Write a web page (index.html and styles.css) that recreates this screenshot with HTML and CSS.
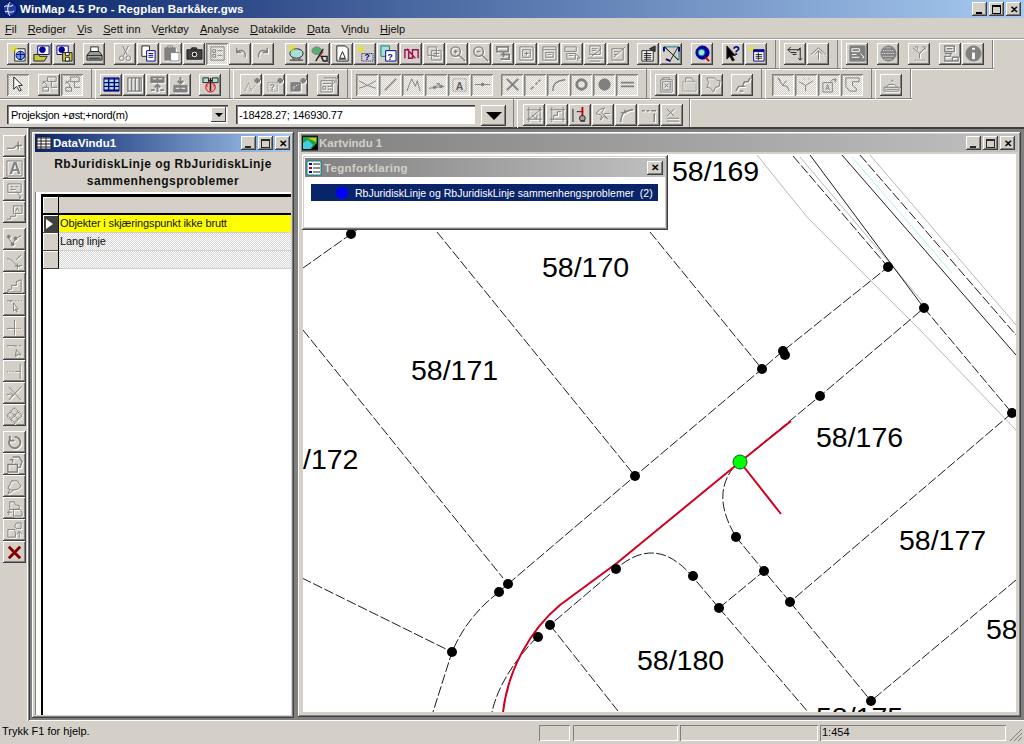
FILE: index.html
```html
<!DOCTYPE html>
<html lang="no">
<head>
<meta charset="utf-8">
<title>WinMap 4.5 Pro - Regplan Barkåker.gws</title>
<link rel="stylesheet" href="styles.css">
</head>
<body>
<header class="titlebar">
  <svg class="appicon" viewBox="0 0 16 16"><circle cx="8" cy="8" r="7" class="sb fn"/><path class="sw" d="M2 6c3-3 6 1 9-2M3 11c3-2 5 2 9-1M8 1c-3 4-3 10 0 14"/></svg>
  <span class="tt">WinMap 4.5 Pro - Regplan Barkåker.gws</span>
  <span class="wbtns top"><b class="wb"><i class="mn"></i></b><b class="wb"><i class="mx"></i></b><b class="wb cl">✕</b></span>
</header>
<nav class="menu">
  <span><u>F</u>il</span><span><u>R</u>ediger</span><span><u>V</u>is</span><span><u>S</u>ett inn</span><span>V<u>e</u>rktøy</span><span><u>A</u>nalyse</span><span><u>D</u>atakilde</span><span><u>D</u>ata</span><span>V<u>i</u>ndu</span><span><u>H</u>jelp</span>
</nav>

<section class="bands">
<div class="band b1">
  <button class="tb"><svg viewBox="0 0 18 18"><path class="sk fw" d="M5 4h11v13H5z"/><circle cx="11" cy="11" r="4.5" class="sb fs"/><path class="sb" d="M7 10h8M11 7v8"/><path class="sy" d="M4 0v8M0 4h8M1 1l6 6M7 1L1 7"/></svg></button>
  <button class="tb"><svg viewBox="0 0 18 18"><path class="sb fw" d="M5 1h12v9H5z"/><circle cx="10" cy="5" r="3" class="sb fb"/><path class="sk fy" d="M1 10h5l1 2h8l-3 5H1z"/></svg></button>
  <button class="tb"><svg viewBox="0 0 18 18"><path class="sb fw" d="M1 1h12v9H1z"/><circle cx="6" cy="5" r="3" class="sb fb"/><path class="sk fy" d="M7 8h10v9H7z"/><path class="sk fw" d="M10 8h4v3h-4zM10 13h4v4h-4z"/></svg></button>
  <button class="tb g7"><svg viewBox="0 0 18 18"><path class="sk fw" d="M5 2h8v5H5z"/><path class="sk fg" d="M1 11l3-4h10l3 4v5H1z"/><path class="sk" d="M1 11h16M3 14h12"/></svg></button>
  <button class="tb off g8"><svg viewBox="0 0 18 18"><path class="sg" d="M6 1l5 10M12 1L7 11"/><circle cx="5" cy="14" r="2.5" class="sg"/><circle cx="12" cy="14" r="2.5" class="sg"/></svg></button>
  <button class="tb"><svg viewBox="0 0 18 18"><path class="sk fw" d="M2 1h8v11H2z"/><path class="sb fw" d="M7 6h9v11H7z"/><path class="sb" d="M9 9h5M9 11h5M9 13h5"/></svg></button>
  <button class="tb off"><svg viewBox="0 0 18 18"><path class="sg fm" d="M2 3h11v13H2z"/><path class="sg fw" d="M8 8h9v9H8z"/><path class="sg" d="M5 3V1h5v2"/></svg></button>
  <button class="tb"><svg viewBox="0 0 18 18"><path class="sk fd" d="M1 5h16v10H1zM5 5l1-2h5l1 2"/><circle cx="9" cy="10" r="3.5" class="sk fw"/><circle cx="9" cy="10" r="1.5" class="sk fk"/></svg></button>
  <button class="tb on"><svg viewBox="0 0 18 18"><path class="sg" d="M2 2h14v14H2zM4 5h3v3H4zM9 6h5M4 10h3v3H4zM9 11h5"/></svg></button>
  <button class="tb off"><svg viewBox="0 0 18 18"><path class="sg s15" d="M5 7c6-3 10 0 9 6M5 3v5h5"/></svg></button>
  <button class="tb off"><svg viewBox="0 0 18 18"><path class="sg s15" d="M13 7C7 4 3 7 4 13M13 3v5H8"/></svg></button>
  <button class="tb g10"><svg viewBox="0 0 18 18"><ellipse cx="9" cy="9" rx="7" ry="5" class="sk fc"/><path class="sy" d="M4 0v7M1 3h7M1 1l6 5M7 1L1 6"/><path class="sk" d="M2 16h14M5 14l2 2M13 14l-2 2"/></svg></button>
  <button class="tb"><svg viewBox="0 0 18 18"><ellipse cx="6" cy="6" rx="5" ry="4" class="sg fl"/><path class="sk s15" d="M5 17L13 4M13 17h4v-5h-6z"/><path class="sr" d="M9 13l4-6"/></svg></button>
  <button class="tb"><svg viewBox="0 0 18 18"><path class="sk fw" d="M3 1h9l3 3v13H3z"/><path class="sk" d="M6 14l3-7 3 7zM5 15h8"/></svg></button>
  <button class="tb"><svg viewBox="0 0 18 18"><path class="sy" d="M4 0v8M0 4h8M1 1l6 6M7 1L1 7"/><path class="sdot" d="M5 9h12v8H5z"/><text x="8" y="16" class="qm">?</text></svg></button>
  <button class="tb"><svg viewBox="0 0 18 18"><path class="st fc" d="M1 1h9v11H1z"/><path class="sb fw" d="M6 6h11v11H6z"/><text x="8" y="16" class="qm">?</text></svg></button>
  <button class="tb"><svg viewBox="0 0 18 18"><path class="sp s15" d="M2 14V5l4 0v9h4V5l6 0v9M4 4l9 10"/></svg></button>
  <button class="tb off"><svg viewBox="0 0 18 18"><path class="sg" d="M2 2h9v9H2zM6 6h10v10H6zM8 9h6M8 12h6"/></svg></button>
  <button class="tb off"><svg viewBox="0 0 18 18"><circle cx="7" cy="7" r="5" class="sg s15"/><path class="sg s15" d="M11 11l6 6M5 7h4M7 5v4"/></svg></button>
  <button class="tb off"><svg viewBox="0 0 18 18"><circle cx="7" cy="7" r="5" class="sg s15"/><path class="sg s15" d="M11 11l6 6M5 7h4"/></svg></button>
  <button class="tb off"><svg viewBox="0 0 18 18"><path class="sm s2" d="M2 2h12v5H2zM6 10h9v5H6M9 7v6"/></svg></button>
  <button class="tb off"><svg viewBox="0 0 18 18"><path class="sg" d="M2 2h14v14H2zM5 5h8v8H5zM7 9h4M9 7v4"/></svg></button>
  <button class="tb off"><svg viewBox="0 0 18 18"><path class="sg" d="M2 2h14v14H2zM2 5h14M5 8h8v5H5zM7 10h4"/></svg></button>
  <button class="tb off"><svg viewBox="0 0 18 18"><path class="sg" d="M1 2h12v5H1zM3 9h9v6H3zM5 11h5M12 9l5 5-3 0 1 3"/></svg></button>
  <button class="tb off"><svg viewBox="0 0 18 18"><path class="sg" d="M3 1h11v9H3zM5 12l10-8M1 14h16M3 17h11M5 4h6M5 6h4"/></svg></button>
  <button class="tb off"><svg viewBox="0 0 18 18"><path class="sg" d="M2 4h12v12H2zM4 13L16 2M4 7h5M4 10h3"/></svg></button>
  <button class="tb g7"><svg viewBox="0 0 18 18"><path class="sk fw" d="M2 6h12v11H2zM4 9h8M4 11h8M4 13h8M4 15h8M7 6v11"/><path class="sk fd" d="M10 4l6-3v6z"/></svg></button>
  <button class="tb"><svg viewBox="0 0 18 18"><path class="st" d="M1 2h16v14z"/><path class="sk" d="M2 2l14 14M16 2L8 16"/><path class="sb s2" d="M1 2v5M17 2v5M3 15l5 2"/></svg></button>
  <button class="tb g8"><svg viewBox="0 0 18 18"><circle cx="9" cy="8" r="7" class="sb fb"/><circle cx="8" cy="8" r="3.5" class="st fc"/><path class="sr s2" d="M12 13l4 4"/></svg></button>
  <button class="tb g8"><svg viewBox="0 0 18 18"><path class="fk sk" d="M2 1v14l3-3 3 5 2-1-3-5h4z"/><text x="8" y="11" class="qb">?</text></svg></button>
  <button class="tb"><svg viewBox="0 0 18 18"><path class="sy" d="M4 1v6M1 4h6M2 2l4 4M6 2L2 6"/><path class="sb fb" d="M6 5h11v2H6z"/><path class="sb fw" d="M6 7h11v10H6z"/><path class="sk" d="M8 10h7M8 12h7M8 14h7M11 8v8"/></svg></button>
  <i class="sep"></i>
  <button class="tb"><svg viewBox="0 0 18 18"><path class="sk" d="M1 5h13M1 5l3-3M1 5l3 3M14 3v13M14 16l-2-2M14 16l2-2M14 3l-3 3M4 8h6M6 10h4"/></svg></button>
  <button class="tb off"><svg viewBox="0 0 18 18"><path class="sg" d="M1 10L9 3l8 7M9 6v10M5 10l4-4 4 4"/></svg></button>
  <i class="sep"></i>
  <button class="tb"><svg viewBox="0 0 18 18"><path class="sm fm" d="M1 1h16v16H1z"/><path class="sw" d="M3 4h8v3H3zM3 10h5M3 13h8M12 9l4 4-2 1"/></svg></button>
  <button class="tb g8"><svg viewBox="0 0 18 18"><circle cx="9" cy="9" r="8" class="sm fm"/><path class="sw dot2" d="M3 6h12M2 9h14M3 12h12M5 15h8M6 3h6"/></svg></button>
  <button class="tb off g8"><svg viewBox="0 0 18 18"><path class="sg" d="M2 3l7 6 6-6M9 9v5M4 2h3v3M12 2h3v3"/><path class="sg dot2" d="M4 16h11"/></svg></button>
  <button class="tb off g8"><svg viewBox="0 0 18 18"><path class="sm s15" d="M3 1h10v6H3zM5 4h6M3 9h8M9 9v3H3v5h8v-4h6v4h-6"/></svg></button>
  <button class="tb"><svg viewBox="0 0 18 18"><circle cx="9" cy="9" r="8" class="sm fm"/><path class="sw s3" d="M9 8v7"/><path class="sw s3" d="M9 3v2"/></svg></button>
  <i class="end"></i>
</div>

<div class="band b2">
  <button class="tb on2"><svg viewBox="0 0 18 18"><path class="sk fw" d="M4 1v13l3-3 3 5 2-1-3-5h4z"/></svg></button>
  <button class="tb off g8"><svg viewBox="0 0 18 18"><path class="sg" d="M7 1h9v5H7zM2 5l4 4 0 3M2 12h6v4H2zM1 8l5-3M11 6v6h6"/></svg></button>
  <button class="tb on"><svg viewBox="0 0 18 18"><path class="sg" d="M7 1h9v5H7zM2 5l4 4 0 3M2 12h6v4H2zM1 8l5-3M11 6v6h6"/></svg></button>
  <i class="sep"></i>
  <button class="tb"><svg viewBox="0 0 18 18"><path class="sb fc" d="M1 2h16v14H1z"/><path class="sb s15" d="M1 3h16M1 7h16M1 11h16M1 15h16M6 2v14M12 2v14"/></svg></button>
  <button class="tb off"><svg viewBox="0 0 18 18"><path class="sg s15" d="M2 2h14v14H2zM6 2v14M10 2v14M14 2v14"/></svg></button>
  <button class="tb off"><svg viewBox="0 0 18 18"><path class="sm fm" d="M2 1h14v6H2z"/><path class="sw" d="M4 3h4M10 3h4"/><path class="sm s2" d="M9 17V9M6 12l3-3 3 3M2 15h4M12 15h4"/></svg></button>
  <button class="tb off"><svg viewBox="0 0 18 18"><path class="sm fm" d="M2 10h14v7H2z"/><path class="sw" d="M4 13h4M10 13h4"/><path class="sm s2" d="M9 1v7M6 5l3 3 3-3"/></svg></button>
  <button class="tb g7"><svg viewBox="0 0 18 18"><path class="sk fc" d="M1 2h6v5H1zM11 2h6v5h-6z"/><circle cx="9" cy="12" r="5" class="sr fp"/><path class="sk s15" d="M7 5h4M9 2v14"/><path class="sr" d="M4 9l2 2M14 9l-2 2"/></svg></button>
  <i class="sep w18"></i>
  <button class="tb off"><svg viewBox="0 0 18 18"><path class="sg dot2" d="M2 16L6 7l3 9M7 16l6-6"/><path class="sm s3" d="M12 5h6M15 2v6"/></svg></button>
  <button class="tb off"><svg viewBox="0 0 18 18"><path class="sg dot2" d="M2 7h10v9H2z"/><text x="4" y="15" class="qg">?</text><path class="sm s3" d="M12 5h6M15 2v6"/></svg></button>
  <button class="tb off"><svg viewBox="0 0 18 18"><path class="sm fm" d="M2 7h10v9H2z"/><path class="sw dot2" d="M4 12l6-3M4 14l3-2"/><path class="sm s3" d="M12 5h6M15 2v6"/></svg></button>
  <button class="tb off g8"><svg viewBox="0 0 18 18"><path class="sg" d="M1 5h12v12H1zM4 2h13v6M3 8h9M3 11h3v3H3zM8 11h4M8 14h4M13 4l3 2-5 5"/></svg></button>
  <i class="sep"></i>
  <button class="tb on"><svg viewBox="0 0 18 18"><path class="sg" d="M0 5l9 5 9-5M0 13l9-3 9 3"/></svg></button>
  <button class="tb on"><svg viewBox="0 0 18 18"><path class="sg s15" d="M3 15L15 3"/></svg></button>
  <button class="tb on"><svg viewBox="0 0 18 18"><path class="sg" d="M2 16L7 3l4 8 2-6 3 11"/></svg></button>
  <button class="tb on"><svg viewBox="0 0 18 18"><path class="sg" d="M1 13l16-2M6 13l6-5M12 8H9M12 8v3"/><circle cx="7" cy="12" r="1.3" class="sg fm"/><circle cx="14" cy="11" r="1.3" class="sg fm"/></svg></button>
  <button class="tb on"><svg viewBox="0 0 18 18"><path class="sm dot2" d="M2 3h14v13H2z"/><text x="5" y="15" class="qa">A</text></svg></button>
  <button class="tb on"><svg viewBox="0 0 18 18"><path class="sg" d="M1 9h16"/><circle cx="9" cy="9" r="1.5" class="sg fm"/></svg></button>
  <button class="tb on g7"><svg viewBox="0 0 18 18"><path class="sm s2" d="M3 3l12 12M15 3L3 15"/></svg></button>
  <button class="tb on"><svg viewBox="0 0 18 18"><path class="sm s15" d="M4 14l3-3M9 9l2-2M12 6l2-2"/></svg></button>
  <button class="tb on"><svg viewBox="0 0 18 18"><path class="sm s15" d="M3 16c0-8 4-11 13-12"/></svg></button>
  <button class="tb on"><svg viewBox="0 0 18 18"><circle cx="9" cy="9" r="5" class="sm s3"/></svg></button>
  <button class="tb on"><svg viewBox="0 0 18 18"><circle cx="9" cy="9" r="6" class="sm fm"/></svg></button>
  <button class="tb on"><svg viewBox="0 0 18 18"><path class="sm s2" d="M2 7h14M2 11h14"/></svg></button>
  <i class="sep w16"></i>
  <button class="tb off"><svg viewBox="0 0 18 18"><path class="sg" d="M3 4h12v13H3zM5 4V2h7v2M5 6h8v9H5zM7 8l4 4M11 8l-4 4"/></svg></button>
  <button class="tb off"><svg viewBox="0 0 18 18"><path class="sg dot2" d="M2 6h14v10H2z"/><path class="sg" d="M5 6V2h6l3 4"/></svg></button>
  <button class="tb off"><svg viewBox="0 0 18 18"><path class="sg" d="M3 2h8l3 3 3 0-1 6-4 1-2 5-3-4-4-1 2-5z"/></svg></button>
  <button class="tb off g7"><svg viewBox="0 0 18 18"><path class="sm s15" d="M2 16l3-5h4l2-5h4l2-4M6 16h4M8 11h4"/></svg></button>
  <i class="sep w18"></i>
  <button class="tb on"><svg viewBox="0 0 18 18"><path class="sg" d="M3 2l5 8 5 1 2 5M8 10l4-5M3 2l3 3"/></svg></button>
  <button class="tb on"><svg viewBox="0 0 18 18"><path class="sg" d="M1 6l7 4 8-5M8 10v6M6 3h1M11 3h1"/></svg></button>
  <button class="tb on"><svg viewBox="0 0 18 18"><path class="sm" d="M2 7h10v10H2zM5 15l2-6 2 6M6 13h2M12 4h5M15 2v5M9 7l4-4"/></svg></button>
  <button class="tb on"><svg viewBox="0 0 18 18"><path class="sm" d="M2 2h14v4h-7v4l4 3v3H6l-4-5z"/></svg></button>
  <i class="sep"></i>
  <button class="tb off"><svg viewBox="0 0 18 18"><path class="sg" d="M1 12h16v4H1zM2 14h14M3 12l3-3h6l3 3M9 4l2 2M11 4L9 6"/></svg></button>
  <i class="end"></i>
</div>

<div class="band b3">
  <div class="combo"><span>Projeksjon +øst;+nord(m)</span><b class="cbtn"><i class="tri"></i></b></div>
  <div class="coord">-18428.27; 146930.77</div>
  <button class="bigdrop"><i class="tri big"></i></button>
  <i class="sep w17"></i>
  <button class="tb off"><svg viewBox="0 0 18 18"><path class="sm" d="M3 1v16M15 1v16M1 4h16M1 14h16M3 14L15 4M7 10l4 4 1-5"/></svg></button>
  <button class="tb off"><svg viewBox="0 0 18 18"><path class="sm" d="M3 1v16M15 1v16M1 4h16M1 14h16M5 14v-4h4V6h4"/></svg></button>
  <button class="tb"><svg viewBox="0 0 18 18"><path class="sk" d="M1 3v14M5 6h7"/><path class="sr s2" d="M11 1v10"/><circle cx="11" cy="13" r="3" class="sk fg"/><path class="sk" d="M9 16h5"/></svg></button>
  <button class="tb off"><svg viewBox="0 0 18 18"><path class="sg" d="M1 8c3-4 5-5 9-6l-3 5 7 7-5-3-3 4 1-5-6-2M10 8h6"/></svg></button>
  <button class="tb off"><svg viewBox="0 0 18 18"><path class="sm s15" d="M3 17c0-9 4-12 13-13M3 7h6M7 4v3"/></svg></button>
  <button class="tb off"><svg viewBox="0 0 18 18"><path class="sm s15" d="M1 5h3M6 5h3M11 5h5M14 8v9"/></svg></button>
  <button class="tb off"><svg viewBox="0 0 18 18"><path class="sm" d="M3 3l8 8M11 3l-8 8M3 13h13M3 16h13"/></svg></button>
  <i class="end tight"></i>
</div>
</section>

<main class="work">
<aside class="vbar">
  <button class="vb off"><svg viewBox="0 0 18 18"><path class="sg s15" d="M1 11h6c2 0 3-3 5-3h5M13 4v8"/></svg></button>
  <button class="vb off"><svg viewBox="0 0 18 18"><path class="sm" d="M1 1h16v16H1z"/><text x="3.5" y="15" class="qa big">A</text></svg></button>
  <button class="vb off"><svg viewBox="0 0 18 18"><path class="sg" d="M2 2h14v9H2zM5 5h3M10 5h3M5 8h5M11 10l5 6-2 0 1 2"/></svg></button>
  <button class="vb off sp1"><svg viewBox="0 0 18 18"><path class="sg" d="M8 2h9v8H8zM10 8l2-4 2 4M1 16h4v-3h5v-2"/></svg></button>
  <button class="vb off gp"><svg viewBox="0 0 18 18"><path class="sg" d="M2 6l5 8 3-6 6-3"/><circle cx="7" cy="14" r="1.6" class="sg fm"/><circle cx="10" cy="8" r="1.6" class="sg fm"/><circle cx="3" cy="6" r="1.6" class="sg fm"/></svg></button>
  <button class="vb off"><svg viewBox="0 0 18 18"><path class="sg" d="M1 6c4 0 7 3 9 6 2 2 4 2 7 1M16 2l-5 5M12 11v6M9 14h6"/></svg></button>
  <button class="vb off"><svg viewBox="0 0 18 18"><path class="sg" d="M2 16l4-1 0-4 5 0 0-4 5-2 0 13H2z"/></svg></button>
  <button class="vb off"><svg viewBox="0 0 18 18"><path class="sg" d="M1 4h7M10 4h1M13 4h1M16 4h1M5 4v2M8 6l5 7-2 0 1 3-1 0-1-3-2 2z"/></svg></button>
  <button class="vb off"><svg viewBox="0 0 18 18"><path class="sm" d="M1 10h9M9 1v16M11 10h1M13 10h1M15 10h1"/></svg></button>
  <button class="vb off"><svg viewBox="0 0 18 18"><path class="sm" d="M1 5h9M9 5l2 2M11 5h1M14 5h2M11 9l5 6-4-1-2 2zM13 14l-3 3"/></svg></button>
  <button class="vb off"><svg viewBox="0 0 18 18"><path class="sm" d="M1 9h1M4 9h1M7 9h1M10 9h5M15 1v16"/></svg></button>
  <button class="vb off"><svg viewBox="0 0 18 18"><path class="sg" d="M3 2l13 14M16 2L3 16M1 10h4M5 8l3 3-3 1"/></svg></button>
  <button class="vb off sp1"><svg viewBox="0 0 18 18"><path class="sm s2 dot2" d="M9 1l8 8-8 8-8-8zM5 5l8 8M13 5l-8 8"/></svg></button>
  <button class="vb off gp"><svg viewBox="0 0 18 18"><path class="sm s2" d="M9 3a6 6 0 1 1-5 3M4 2v5h5"/></svg></button>
  <button class="vb off"><svg viewBox="0 0 18 18"><path class="sm s15" d="M7 1h7l3 5-2 6h-3M4 4h3v3M2 9h10v8H2z"/></svg></button>
  <button class="vb off"><svg viewBox="0 0 18 18"><path class="sm" d="M2 11l4-8h6l4 6-4 3-6 1zM4 12l-2 5 6-4"/></svg></button>
  <button class="vb off"><svg viewBox="0 0 18 18"><path class="sm" d="M4 2h5l1 3 4 1v4H4zM8 10h7l2 3v4H8zM1 13h5M3 11v5"/></svg></button>
  <button class="vb off"><svg viewBox="0 0 18 18"><path class="sm" d="M11 1h5v6h-5l-2-2zM2 8h7l1 4v4H2zM14 10v7M11 13l3-3 3 3"/></svg></button>
  <button class="vb"><svg viewBox="0 0 18 18"><path class="sx" d="M3 3l12 12M15 3L3 15"/></svg></button>
</aside>

<div class="mdi">
  <section class="win datawin">
    <div class="wtitle active">
      <svg class="wicon" viewBox="0 0 16 16"><path class="sk fw" d="M1 2h14v12H1z"/><path class="sk" d="M1 3h14M1 6h14M1 9h14M1 12h14M5 2v12M10 2v12"/></svg>
      <span class="wname">DataVindu1</span>
      <span class="wbtns"><b class="wb m"><i class="mn"></i></b><b class="wb m"><i class="mx"></i></b><b class="wb m cl">✕</b></span>
    </div>
    <h2 class="dhead">RbJuridiskLinje og RbJuridiskLinje<br>sammenhengsproblemer</h2>
    <div class="tablewrap">
      <div class="grid">
        <div class="sel"></div><div class="hdr"></div>
        <div class="sel cur"><i class="arrow"></i></div><div class="cell yellow">Objekter i skjæringspunkt ikke brutt</div>
        <div class="sel"></div><div class="cell dither">Lang linje</div>
        <div class="sel"></div><div class="cell dither"></div>
      </div>
    </div>
  </section>

  <section class="win kartwin">
    <div class="wtitle">
      <svg class="wicon" viewBox="0 0 16 16"><path class="fk sk" d="M0 1h16v14H0z"/><path class="fgr" d="M1 2h14v6l-6 6H1z"/><path class="fcy" d="M1 8l5-3 5 5-3 4H1z"/><path class="fo" d="M6 3h8v4z"/></svg>
      <span class="wname dim">Kartvindu 1</span>
      <span class="wbtns kart"><b class="wb m"><i class="mn"></i></b><b class="wb m"><i class="mx"></i></b><b class="wb m cl">✕</b></span>
    </div>
    <div class="client">
      <svg class="map" viewBox="303 154 713 558">
        <g class="gy">
          <path d="M757 155L807 217 920 330 1016 430M800 157L927 307M870 155L1016 325"/>
        </g>
        <path class="cy" d="M852 157L952 273"/>
        <g class="solid">
          <path d="M810 155L924 308M842 155L1016 355"/>
        </g>
        <g class="dash">
          <path d="M793 156L888 267M860 155L1016 335M303 268L351 234M351 234L362 226"/>
          <path d="M508 584L635 476 762 369 783 351 888 267M740 462L820 396 924 308M924 308L1012 413M1012 413L790 602M1016 580L871 701M790 602L871 701"/>
          <path d="M790 602L764 571 736 537C720 510 718 488 733 468M719 608L764 571M719 608L692 576C665 545 640 548 616 569L550 625M719 608L808 712M550 625L618 711"/>
          <path d="M537 637C515 660 498 685 492 712M508 584L499 592C478 608 462 628 452 652L433 712M302 578L452 652M303 330L503 578M437 232L635 476M650 232L762 369"/>
        </g>
        <path class="red" d="M791 421L740 462 617 563 560 605C530 630 508 670 503 712M740 462L781 514"/>
        <g class="dots">
          <circle cx="351" cy="234" r="5"/><circle cx="888" cy="267" r="5"/><circle cx="924" cy="308" r="5"/><circle cx="783" cy="351" r="5"/><circle cx="785" cy="355" r="5"/><circle cx="762" cy="369" r="5"/><circle cx="820" cy="396" r="5"/><circle cx="1012" cy="413" r="5"/><circle cx="635" cy="476" r="5"/><circle cx="736" cy="537" r="5"/><circle cx="764" cy="571" r="5"/><circle cx="790" cy="602" r="5"/><circle cx="719" cy="608" r="5"/><circle cx="693" cy="576" r="5"/><circle cx="616" cy="569" r="5"/><circle cx="550" cy="625" r="5"/><circle cx="538" cy="637" r="5"/><circle cx="508" cy="584" r="5"/><circle cx="499" cy="592" r="5"/><circle cx="452" cy="652" r="5"/><circle cx="871" cy="701" r="5"/>
        </g>
        <circle class="green" cx="740" cy="462" r="7"/>
        <g class="labels">
          <text x="672" y="181">58/169</text><text x="542" y="277">58/170</text><text x="411" y="380">58/171</text><text x="303" y="469">/172</text><text x="816" y="447">58/176</text><text x="899" y="550">58/177</text><text x="637" y="670">58/180</text><text x="986" y="639">58</text><text x="816" y="727">58/175</text>
        </g>
      </svg>
    </div>
    <div class="legend">
      <div class="ltitle">
        <svg class="licon" viewBox="0 0 16 16"><path class="st fw" d="M1 1h14v14H1z"/><path class="fb" d="M3 3h3v2H3z"/><path class="fr" d="M3 7h3v2H3z"/><path class="fb" d="M3 11h3v2H3z"/><path class="sk" d="M7 4h7M7 8h7M7 12h7"/></svg>
        <span class="wname dim spaced">Tegnforklaring</span>
        <b class="wb lclose">✕</b>
      </div>
      <div class="lbody">
        <div class="lrow"><i class="ldot"></i><span>RbJuridiskLinje og RbJuridiskLinje sammenhengsproblemer&nbsp; (2)</span></div>
      </div>
    </div>
  </section>
</div>
</main>

<footer class="status">
  <span class="smsg">Trykk F1 for hjelp.</span>
  <span class="pane p1"></span><span class="pane p2"></span><span class="pane p3"></span><span class="pane p4">1:454</span>
  <svg class="grip" viewBox="0 0 14 14"><path class="sm" d="M13 1L1 13M13 5L5 13M13 9L9 13"/></svg>
</footer>
</body>
</html>
```
FILE: styles.css
```css
* { box-sizing: border-box; }
html, body { margin: 0; padding: 0; }
body {
  width: 1024px; height: 744px; overflow: hidden; display: flex; flex-direction: column;
  background: #d4d0c8; color: #000; font: 11px "Liberation Sans", Arial, sans-serif;
}
button { padding: 0; margin: 0; font: inherit; background: none; border: 0; }

/* title bar */
.titlebar {
  height: 18px; flex: none; display: flex; align-items: center; padding-left: 2px;
  background: linear-gradient(90deg, #0a246a, #a6caf0);
}
.appicon { width: 16px; height: 16px; margin-right: 2px; }
.tt { color: #fff; font-weight: bold; font-size: 11.5px; letter-spacing: .14px; }
.wbtns { margin-left: auto; display: flex; gap: 2px; }
.wbtns.top { margin-right: 3px; }
.wbtns.kart { margin-right: 2px; }
.wb {
  width: 15px; height: 14px; background: #d4d0c8; display: flex; align-items: center; justify-content: center;
  box-shadow: inset -1px -1px 0 #404040, inset 1px 1px 0 #fff, inset -2px -2px 0 #808080;
  font: bold 10px "Liberation Sans", sans-serif; color: #000; position: relative;
}
.wb .mn { width: 6px; height: 2px; background: #000; margin-top: 7px; margin-right: 2px; }
.wb .mx { width: 9px; height: 9px; border: 1px solid #000; border-top-width: 2px; }
.wb.m .mn, .wb.m .mx { opacity: .8; }

/* menu */
.menu { height: 21px; flex: none; display: flex; align-items: center; padding-left: 5px; font-size: 11px; gap: 11px; color: #111; }

/* toolbars */
.bands { flex: none; height: 89px; border-top: 1px solid #fff; box-shadow: 0 -1px 0 #a0a0a0; border-bottom: 1px solid #404040; }
.band { display: flex; width: fit-content; padding-left: 7px; border-bottom: 1px solid #808080; box-shadow: 0 1px 0 #fff; }
.b1 { height: 29px; padding-top: 3px; }
.b2 { height: 30px; padding-top: 5px; }
.b3 { height: 28px; padding-top: 5px; border-bottom: 0; box-shadow: none; }
.tb {
  width: 22px; height: 21.5px; margin-right: 1px; flex: none; display: flex; align-items: center; justify-content: center;
  background: #d4d0c8;
  box-shadow: inset -1px -1px 0 #404040, inset 1px 1px 0 #fff, inset -2px -2px 0 #808080;
}
.tb svg, .vb svg { width: 17px; height: 17px; display: block; }
.off svg { filter: drop-shadow(1px 1px 0 #fff); }
.tb.on, .tb.on2 {
  background: repeating-conic-gradient(#d4d0c8 0 25%, #f4f3f0 0 50%) 0 0 / 2px 2px;
  box-shadow: inset 1px 1px 0 #808080, inset -1px -1px 0 #fff, inset 2px 2px 0 #b0aca4;
}
.g7 { margin-left: 7px; }
.g8 { margin-left: 8px; }
.g10 { margin-left: 10px; }
.sep { width: 16px; flex: none; margin-top: -5px; margin-bottom: -1px; position: relative; }
.b1 .sep { margin-top: -3px; }
.b3 .sep { margin-bottom: -1px; }
.sep::after {
  content: ""; position: absolute; top: 0; bottom: 0; left: 7px; width: 3px;
  border-left: 1px solid #808080; border-right: 1px solid #fff;
}
.w16 { width: 16px; }
.w17 { width: 17px; }
.w18 { width: 18px; }
.end { width: 8px; flex: none; margin-top: -3px; border-right: 1px solid #808080; box-shadow: 1px 0 0 #fff; margin-right: 1px; }
.b2 .end { margin-top: -5px; }
.b3 .end { margin-top: -5px; width: 6px; }

.combo {
  width: 221px; height: 19px; margin-top: 1px; flex: none; background: #fff; display: flex; align-items: center; padding-left: 4px; justify-content: space-between;
  box-shadow: inset 1px 1px 0 #404040, inset 2px 2px 0 #808080, inset -1px -1px 0 #e8e8e8;
  font-size: 11px; letter-spacing: -.3px;
}
.cbtn {
  width: 15px; height: 15px; margin-right: 2px; background: #d4d0c8; display: flex; align-items: center; justify-content: center;
  box-shadow: inset -1px -1px 0 #404040, inset 1px 1px 0 #fff;
}
.tri { width: 0; height: 0; border: 4px solid transparent; border-top: 4px solid #000; border-bottom: 0; }
.tri.big { border-width: 8px 8px 0; border-top-color: #000; border-bottom: 0; }
.coord {
  width: 239px; height: 19px; margin-left: 8px; margin-top: 1px; flex: none; background: #fff; padding: 3px 0 0 3px; font-size: 11px; letter-spacing: -.2px; line-height: 14px;
  box-shadow: inset 1px 1px 0 #404040, inset 2px 2px 0 #808080;
}
.bigdrop {
  width: 25px; height: 21px; margin-left: 6px; margin-top: 1px; flex: none; background: #d4d0c8; display: flex; align-items: center; justify-content: center;
  box-shadow: inset -1px -1px 0 #404040, inset 1px 1px 0 #fff, inset -2px -2px 0 #808080;
}

/* SVG paint classes */
svg path, svg circle, svg ellipse { fill: none; stroke-width: 1; }
.sk { stroke: #202020; } .sg { stroke: #808080; } .sm { stroke: #808080; } .sb { stroke: #000080; }
.sy { stroke: #e8e800; } .sw { stroke: #fff; } .sr { stroke: #d00000; } .st { stroke: #008080; }
.sp { stroke: #a01050; } svg .sx { stroke: #800000; stroke-width: 3; }
.sdot { stroke: #000080; stroke-dasharray: 1 1; }
svg .s2 { stroke-width: 2; } svg .s3 { stroke-width: 3; } svg .s15 { stroke-width: 1.5; }
svg .dot2 { stroke-dasharray: 1 1; }
svg .fw { fill: #fff; } svg .fy { fill: #c8c840; } svg .fb { fill: #0000a8; } svg .fk { fill: #000; }
svg .fg { fill: #a0a0a0; } svg .fm { fill: #808080; } svg .fd { fill: #404040; } svg .fc { fill: #a8e0d8; }
svg .fl { fill: #50b070; } svg .fp { fill: #e8b0a8; } svg .fr { fill: #c00020; } svg .fn { fill: #2040a0; }
svg .fgr { fill: #20a040; } svg .fcy { fill: #40d0e0; } svg .fo { fill: #e0c020; } svg .fs { fill: #70a0d8; }
.qm { font: bold 9px "Liberation Sans", sans-serif; fill: #000080; }
.qb { font: bold 13px "Liberation Sans", sans-serif; fill: #000080; }
.qg { font: bold 9px "Liberation Sans", sans-serif; fill: #808080; }
.qa { font: bold 11px "Liberation Sans", sans-serif; fill: #606060; }
.qa.big { font-size: 17px; fill: #808080; }

/* work area */
.work { flex: 1; display: flex; min-height: 0; }
.vbar { width: 29px; flex: none; padding: 7px 0 0 3px; display: flex; flex-direction: column; border-right: 1px solid #808080; box-shadow: inset -1px 0 0 #fff; }
.vb {
  width: 23px; height: 22px; flex: none; display: flex; align-items: center; justify-content: center; background: #d4d0c8;
  box-shadow: inset -1px -1px 0 #404040, inset 1px 1px 0 #fff, inset -2px -2px 0 #808080;
}
.sp1 { margin-bottom: 0; }
.gp { margin-top: 5px; }
.mdi { flex: 1; position: relative; background: #808080; box-shadow: inset 1px 1px 0 #404040; border-bottom: 1px solid #fff; }

/* MDI windows */
.win {
  position: absolute; background: #d4d0c8; padding: 2px 3px 3px;
  box-shadow: inset -1px -1px 0 #404040, inset 1px 1px 0 #fff, inset -2px -2px 0 #808080;
}
.datawin { left: 3px; top: 4px; width: 262px; height: 586px; display: flex; flex-direction: column; }
.kartwin { left: 269px; top: 4px; width: 723px; height: 585px; display: flex; flex-direction: column; }
.wtitle {
  height: 18px; flex: none; display: flex; align-items: center; padding: 0 1px 0 1px;
  background: linear-gradient(90deg, #808080, #c0c0c0);
}
.wtitle.active { background: linear-gradient(90deg, #0a246a, #a6caf0); }
.wicon { width: 16px; height: 16px; margin-right: 1px; flex: none; }
.wname { font-weight: bold; font-size: 11.5px; color: #fff; }
.wname.dim { color: #d4d0c8; }
.wname.spaced { letter-spacing: .3px; }
.dhead {
  margin: 0; height: 40px; flex: none; text-align: center; font-size: 12px; line-height: 17px; font-weight: bold;
  letter-spacing: .48px; padding-top: 4px; color: #111;
}
.tablewrap {
  flex: 1; background: #fff; padding: 2px 0 0 5px;
  border-left: 1px solid #808080;
}
.grid {
  height: 100%; display: grid; grid-template-columns: 16px 1fr; grid-template-rows: 18px 18px 18px 18px 1fr;
  background: #fff; border-left: 2px solid #000; border-top: 3px solid #000;
}
.sel { background: #d4d0c8; border-right: 1px solid #000; border-bottom: 1px solid #404040; box-shadow: inset 1px 1px 0 #fff; display: flex; align-items: center; }
.sel.cur { background: #404040; }
.hdr { background: #d4d0c8; border-bottom: 2px solid #000; }
.sel:first-child { border-bottom: 2px solid #000; }
.arrow { margin-left: 3px; width: 0; height: 0; border: 5px solid transparent; border-left: 7px solid #fff; border-right: 0; }
.cell { padding-left: 1px; line-height: 17px; font-size: 11px; letter-spacing: -.14px; border-bottom: 1px solid #d4d0c8; color: #111; }
.yellow { background: #ffff00; }
.dither { background: repeating-conic-gradient(#d4d4d4 0 25%, #fff 0 50%) 0 0 / 2px 2px; }

.client { flex: 1; min-height: 0; padding: 2px; }
.map { display: block; width: 713px; height: 558px; background: #fff; }
.gy path { fill: none; stroke: #b8b8b8; }
.cy { fill: none; stroke: #b0f0f0; }
.solid path { fill: none; stroke: #000; stroke-width: .9; }
.dash path { fill: none; stroke: #000; stroke-width: .9; stroke-dasharray: 10 2.5; }
svg .red { fill: none; stroke: #d00020; stroke-width: 2; }
svg .dots circle { fill: #000; stroke: none; }
svg .green { fill: #00ff00; stroke: #006040; }
.labels text { font: 28.5px "Liberation Sans", Arial, sans-serif; fill: #000; }

/* legend tool window, floats over the map */
.legend {
  position: absolute; left: 4px; top: 23px; width: 366px; height: 75px; background: #fff; padding: 3px;
  box-shadow: inset -1px -1px 0 #404040, inset 1px 1px 0 #fff, inset -2px -2px 0 #808080, inset 2px 2px 0 #d4d0c8, inset -3px -3px 0 #d4d0c8;
}
.ltitle { height: 19px; display: flex; align-items: center; padding-left: 1px; background: linear-gradient(90deg, #808080, #c0c0c0); }
.licon { width: 16px; height: 16px; margin-right: 2px; }
.lclose { margin-left: auto; margin-right: 2px; width: 16px; }
.lbody { padding: 7px 7px 0 6px; }
.lrow { height: 17px; background: #0a246a; color: #fff; display: flex; align-items: center; padding-left: 25px; font-size: 10.5px; white-space: pre; overflow: hidden; }
.ldot { width: 12px; height: 12px; border-radius: 50%; background: #0000ff; margin-right: 7px; flex: none; }

/* status bar */
.status { height: 23px; flex: none; display: flex; align-items: center; position: relative; }
.smsg { position: absolute; left: 2px; top: 4px; font-size: 11px; }
.pane { height: 16px; box-shadow: inset 1px 1px 0 #808080, inset -1px -1px 0 #fff; margin-right: 3px; line-height: 15px; padding-left: 2px; flex: none; }
.p1 { margin-left: 539px; width: 31px; }
.p2 { width: 105px; margin-right: 2px; }
.p3 { width: 138px; margin-right: 2px; }
.p4 { width: 186px; margin-right: 0; }
.grip { width: 14px; height: 14px; margin-left: 3px; align-self: flex-end; margin-bottom: 2px; }
```
